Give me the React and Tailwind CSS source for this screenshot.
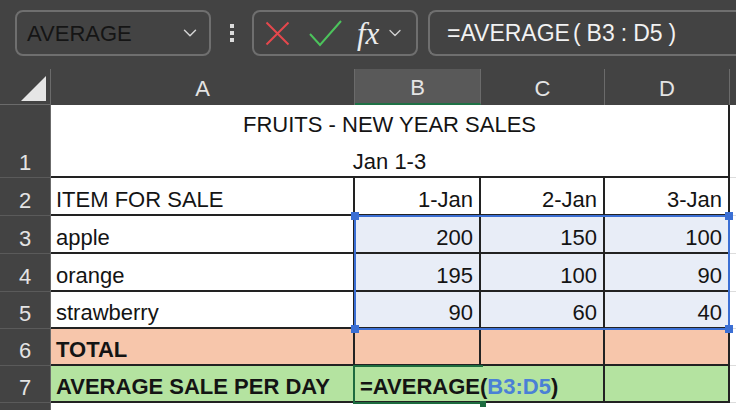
import { ChevronDown } from "lucide-react";

const ink = "border-[#222]";
const txt = "text-[22px] text-[#141414] leading-none";

const Cell = ({ className = "", children }) => (
  <div className={`flex items-end pb-[3px] overflow-visible whitespace-nowrap ${txt} ${className}`}>
    {children}
  </div>
);

const RowHead = ({ n, className = "" }) => (
  <div
    className={`flex items-end justify-center pb-[3px] bg-[#434343] border-r border-b border-r-[#6b6b6b] border-b-[#5a5a5a] text-[22px] leading-none text-[#e4e4e4] ${className}`}
  >
    {n}
  </div>
);

const ColHead = ({ label, active }) => (
  <div
    className={`flex items-center justify-center pt-[3px] border-r border-[#6b6b6b] text-[22px] leading-none text-[#e4e4e4] ${
      active ? "bg-[#595959] border-b-2 border-b-[#1e7145]" : "bg-[#434343]"
    }`}
  >
    {label}
  </div>
);

const Toolbar = () => (
  <div className="flex h-[69px] items-start pt-[10px] pl-[15px]">
    {/* name box */}
    <div className="flex h-[46px] w-[196px] shrink-0 items-center justify-between rounded-[8px] border-2 border-[#6f6f6f] pl-[10px] pr-[8px]">
      <span className="text-[22px] text-[#151515]">AVERAGE</span>
      <ChevronDown size={22} strokeWidth={1.6} className="text-[#d4d4d4]" />
    </div>

    <div className="flex h-[46px] w-[41px] shrink-0 flex-col items-center justify-center gap-[3px]">
      <span className="h-[4px] w-[4px] bg-[#dcdcdc]" />
      <span className="h-[4px] w-[4px] bg-[#dcdcdc]" />
      <span className="h-[4px] w-[4px] bg-[#dcdcdc]" />
    </div>

    {/* cancel / enter / insert function */}
    <div className="flex h-[46px] w-[166px] shrink-0 items-center rounded-[8px] border-2 border-[#6f6f6f] pl-[11px]">
      <svg width="25" height="25" viewBox="0 0 25 25" className="shrink-0">
        <path d="M1.5 1.5 L23.5 23.5 M23.5 1.5 L1.5 23.5" stroke="#e5484d" strokeWidth="2" fill="none" />
      </svg>
      <svg width="36" height="30" viewBox="0 0 36 30" className="ml-[18px] shrink-0">
        <path d="M2 16 L12 27 L33 3" stroke="#4cc35c" strokeWidth="2" fill="none" />
      </svg>
      <span className="ml-[13px] font-['Liberation_Serif',serif] text-[31px] italic leading-none text-[#ececec]">
        fx
      </span>
      <ChevronDown size={20} strokeWidth={1.6} className="ml-[6px] text-[#cfcfcf]" />
    </div>

    {/* formula input */}
    <div className="ml-[10px] flex h-[46px] w-[330px] shrink-0 items-center rounded-l-[8px] border-2 border-r-0 border-[#6f6f6f] pl-[17px] text-[23px] text-[#f2f2f2]">
      <span>=AVERAGE</span>
      <span className="ml-[3px]">(</span>
      <span className="ml-[6px]">B3</span>
      <span className="mx-[6px]">:</span>
      <span>D5</span>
      <span className="ml-[6px]">)</span>
    </div>
  </div>
);

export default function App() {
  return (
    <div className="h-[410px] w-[736px] overflow-hidden bg-[#434343] font-['Liberation_Sans',Arial,sans-serif]">
      <Toolbar />

      <div className="relative grid grid-cols-[51px_304px_126px_124px_125px_1fr] grid-rows-[36px_73px_38px_38px_38px_37px_37px_37px_10px]">
        {/* column headers */}
        <div className="relative border-r border-b border-[#6b6b6b] bg-[#434343]">
          <svg width="51" height="36" viewBox="0 0 51 36" className="absolute inset-0">
            <path d="M21 32 L46 32 L46 7 Z" fill="#e6e6e6" />
          </svg>
        </div>
        <ColHead label="A" />
        <ColHead label="B" active />
        <ColHead label="C" />
        <ColHead label="D" />
        <div className="bg-[#434343]" />

        {/* row 1: title */}
        <RowHead n="1" />
        <div
          className={`col-span-4 flex flex-col items-center justify-end gap-[15px] pb-[3px] bg-white border-r-2 border-b-2 ${ink} text-[22px] leading-none text-[#141414]`}
        >
          <span>FRUITS - NEW YEAR SALES</span>
          <span>Jan 1-3</span>
        </div>
        <div className="border-b border-[#dcdcdc] bg-white" />

        {/* row 2 */}
        <RowHead n="2" />
        <Cell className={`bg-white border-r-2 border-b-2 ${ink} pl-[5px]`}>ITEM FOR SALE</Cell>
        <Cell className={`justify-end bg-white border-r-2 border-b-2 ${ink} pr-[6px]`}>1-Jan</Cell>
        <Cell className={`justify-end bg-white border-r-2 border-b-2 ${ink} pr-[6px]`}>2-Jan</Cell>
        <Cell className={`justify-end bg-white border-r-2 border-b-2 ${ink} pr-[6px]`}>3-Jan</Cell>
        <div className="border-b border-[#dcdcdc] bg-white" />

        {/* rows 3-5 */}
        {[
          ["3", "apple", 200, 150, 100],
          ["4", "orange", 195, 100, 90],
          ["5", "strawberry", 90, 60, 40],
        ].map(([n, item, b, c, d]) => (
          <div key={n} className="contents">
            <RowHead n={n} />
            <Cell className={`bg-white border-r-2 border-b-2 ${ink} pl-[5px]`}>{item}</Cell>
            <Cell className={`justify-end bg-[#e8edf7] border-r-2 border-b-2 ${ink} pr-[6px]`}>{b}</Cell>
            <Cell className={`justify-end bg-[#e8edf7] border-r-2 border-b-2 ${ink} pr-[6px]`}>{c}</Cell>
            <Cell className={`justify-end bg-[#e8edf7] border-r-2 border-b-2 ${ink} pr-[6px]`}>{d}</Cell>
            <div className="border-b border-[#dcdcdc] bg-white" />
          </div>
        ))}

        {/* row 6 */}
        <RowHead n="6" />
        <Cell className={`bg-[#f7c6ab] border-r-2 border-b-2 ${ink} pl-[5px] font-bold`}>TOTAL</Cell>
        <Cell className={`bg-[#f7c6ab] border-r-2 border-b-2 ${ink}`} />
        <Cell className={`bg-[#f7c6ab] border-r-2 border-b-2 ${ink}`} />
        <Cell className={`bg-[#f7c6ab] border-r-2 border-b-2 ${ink}`} />
        <div className="border-b border-[#dcdcdc] bg-white" />

        {/* row 7 */}
        <RowHead n="7" />
        <Cell className={`bg-[#b4e3a0] border-r-2 border-b-2 ${ink} pl-[5px] font-bold`}>
          AVERAGE SALE PER DAY
        </Cell>
        <Cell className={`col-span-2 bg-[#b4e3a0] border-r-2 border-b-2 ${ink} pl-[5px] font-bold`}>
          =AVERAGE(<span className="text-[#4a80d6]">B3:D5</span>)
        </Cell>
        <Cell className={`bg-[#b4e3a0] border-r-2 border-b-2 ${ink}`} />
        <div className="border-b border-[#dcdcdc] bg-white" />

        {/* row 8 (partial) */}
        <div className="border-r border-[#6b6b6b] bg-[#434343]" />
        <div className="col-span-5 bg-white" />

        {/* referenced range B3:D5 */}
        <div className="pointer-events-none absolute left-[354px] top-[146px] h-[115px] w-[376px] border-2 border-[#3b6fd4]">
          <span className="absolute -left-[5px] -top-[5px] h-[8px] w-[8px] bg-[#3b6fd4]" />
          <span className="absolute -right-[5px] -top-[5px] h-[8px] w-[8px] bg-[#3b6fd4]" />
          <span className="absolute -left-[5px] -bottom-[5px] h-[8px] w-[8px] bg-[#3b6fd4]" />
          <span className="absolute -right-[5px] -bottom-[5px] h-[8px] w-[8px] bg-[#3b6fd4]" />
        </div>

        {/* active cell B7 */}
        <div className="pointer-events-none absolute left-[353px] top-[296px] h-[39px] w-[130px] border-l-2 border-t-2 border-b-2 border-[#1d6b3f]">
          <span className="absolute -right-[3px] -bottom-[5px] h-[6px] w-[6px] bg-[#1d6b3f]" />
        </div>
      </div>
    </div>
  );
}
